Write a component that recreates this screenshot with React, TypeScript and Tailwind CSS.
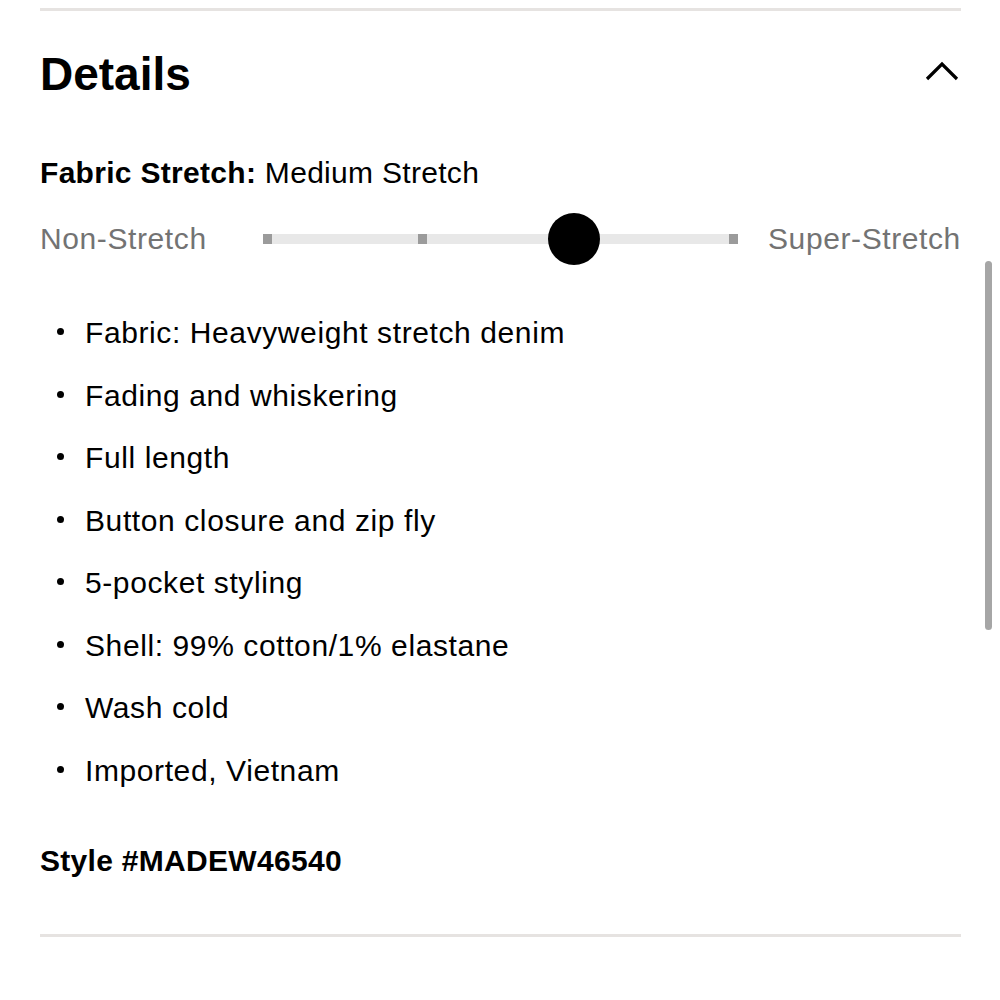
const bullets = [
  "Fabric: Heavyweight stretch denim",
  "Fading and whiskering",
  "Full length",
  "Button closure and zip fly",
  "5-pocket styling",
  "Shell: 99% cotton/1% elastane",
  "Wash cold",
  "Imported, Vietnam",
];

function StretchSlider() {
  return (
    <div className="mt-[25px] flex h-[52px] items-center">
      <span className="w-[223px] shrink-0 whitespace-nowrap text-[30px] leading-none tracking-[0.02em] text-[#737373]">Non-Stretch</span>
      <div className="relative h-[10px] w-[475px] shrink-0 bg-[#e8e8e8]">
        <span className="absolute left-0 top-0 h-[10px] w-[9px] bg-[#9b9b9b]" />
        <span className="absolute left-[155px] top-0 h-[10px] w-[9px] bg-[#9b9b9b]" />
        <span className="absolute right-0 top-0 h-[10px] w-[9px] bg-[#9b9b9b]" />
        <span className="absolute left-[285px] top-[-21px] h-[52px] w-[52px] rounded-full bg-black" />
      </div>
      <span className="ml-[30px] shrink-0 whitespace-nowrap text-[30px] leading-none tracking-[0.02em] text-[#737373]">Super-Stretch</span>
    </div>
  );
}

export default function App() {
  return (
    <div className="relative h-[1000px] w-[1000px] overflow-hidden bg-white font-['Liberation_Sans',Arial,sans-serif] text-black">
      <div className="px-[40px] pt-[8px]">
        <div className="h-[3px] w-[921px] bg-[#e6e3e1]" />

        <div className="mt-[40px] flex items-start justify-between">
          <h2 className="text-[46px] font-bold leading-none">Details</h2>
          <svg className="mt-[10px] mr-[1px]" width="34" height="20" viewBox="0 0 34 20" fill="none" aria-hidden>
            <path d="M2 18 L17 3 L32 18" stroke="#000" strokeWidth="3.2" />
          </svg>
        </div>

        <p className="mt-[61px] text-[30px] leading-none tracking-[0.01em]">
          <span className="font-bold">Fabric Stretch:</span> Medium Stretch
        </p>

        <StretchSlider />

        <ul className="mt-[37px]">
          {bullets.map((item) => (
            <li key={item} className="flex items-start">
              <span className="ml-[17px] mr-[21px] mt-[26px] h-[7px] w-[7px] shrink-0 rounded-full bg-black" />
              <span className="text-[30px] leading-[62.5px] tracking-[0.02em]">{item}</span>
            </li>
          ))}
        </ul>

        <p className="mt-[44px] text-[30px] font-bold leading-none tracking-[0.01em]">Style #MADEW46540</p>

        <div className="mt-[58px] h-[3px] w-[921px] bg-[#e6e3e1]" />
      </div>

      <div className="absolute left-[985px] top-[261px] h-[369px] w-[7px] rounded-full bg-[#a6a6a6]" />
    </div>
  );
}
